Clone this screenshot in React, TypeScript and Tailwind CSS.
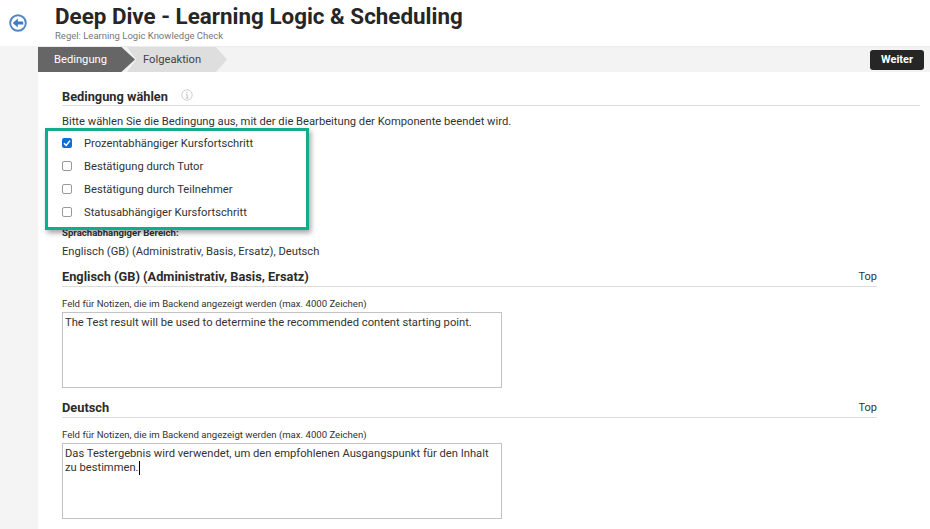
const rows = [
  { label: 'Prozentabhängiger Kursfortschritt', checked: true },
  { label: 'Bestätigung durch Tutor', checked: false },
  { label: 'Bestätigung durch Teilnehmer', checked: false },
  { label: 'Statusabhängiger Kursfortschritt', checked: false },
]

function BackIcon() {
  return (
    <svg width="18" height="18" viewBox="0 0 18 18">
      <circle cx="9" cy="9" r="7.8" fill="#fff" stroke="#4f86bf" strokeWidth="1.9" />
      <path d="M3.8 9 L8.8 4.6 V7.6 H14.2 V10.4 H8.8 V13.4 Z" fill="#3f7cbd" />
    </svg>
  )
}

function InfoIcon() {
  return (
    <svg width="12" height="12" viewBox="0 0 12 12" fill="none">
      <circle cx="6" cy="6" r="5.2" stroke="#cfcfcf" />
      <path d="M6 2.8v1.3M4.8 5.4H6.2V9M4.6 9h2.9" stroke="#c0c0c0" />
    </svg>
  )
}

function CheckRow({ label, checked }: { label: string; checked: boolean }) {
  return (
    <div className="flex h-[23px] items-center">
      {checked ? (
        <span className="flex h-[10px] w-[10px] items-center justify-center rounded-[2px] bg-[#0f6fd6]">
          <svg width="8" height="8" viewBox="0 0 8 8" fill="none">
            <path d="M1 4.2 3.2 6.4 7 1.6" stroke="#fff" strokeWidth="1.5" />
          </svg>
        </span>
      ) : (
        <span className="h-[10px] w-[10px] rounded-[2px] border border-[#999] bg-white" />
      )}
      <span className="ml-[12px] pt-[3px] text-[11.2px] text-[#333]">{label}</span>
    </div>
  )
}

function LangBlock({ title, text, caret }: { title: string; text: string; caret?: boolean }) {
  return (
    <section className="w-[815px]">
      <div className="flex h-[28px] items-end justify-between border-b border-[#dcdcdc] pb-[2px]">
        <h3 className="text-[12.8px] leading-[15px] font-bold text-[#2b2b2b]">{title}</h3>
        <a className="text-[11px] leading-[15px] text-[#333]">Top</a>
      </div>
      <p className="mt-[10px] text-[9.6px] leading-[13px] text-[#333]">
        Feld für Notizen, die im Backend angezeigt werden (max. 4000 Zeichen)
      </p>
      <div className="mt-[2px] h-[76px] w-[440px] border border-[#c3c3c3] bg-white px-[2px] pt-[3px] text-[11.2px] leading-[14px] text-[#333]">
        {text}
        {caret && <span className="inline-block h-[14px] w-px bg-black align-top" />}
      </div>
    </section>
  )
}

function App() {
  return (
    <div className="relative h-[529px] w-[930px] overflow-hidden bg-white font-['Roboto',sans-serif]">
      {/* Header */}
      <header className="flex h-[46px] items-start">
        <div className="flex w-[38px] justify-center pt-[14px] pr-[3px]">
          <BackIcon />
        </div>
        <div className="pl-[17px] pt-[4px]">
          <h1 className="text-[22.4px] leading-[25px] font-bold text-[#262626]">
            Deep Dive - Learning Logic &amp; Scheduling
          </h1>
          <p className="mt-[1px] text-[9.5px] leading-[11px] text-[#777]">Regel: Learning Logic Knowledge Check</p>
        </div>
      </header>

      <div className="flex h-[483px]">
        <aside className="w-[38px] bg-[#f4f4f4]" />

        <main className="flex-1">
          {/* Step bar */}
          <div className="flex h-[26px] items-center justify-between border-t border-[#ececec] bg-[#f3f3f3] pr-[6px]">
            <div className="flex h-full">
              <div className="flex w-[97px] items-center bg-[#666] pt-[2px] pl-[16px] text-[11.2px] text-white [clip-path:polygon(0_0,86%_0,100%_50%,86%_100%,0_100%)]">
                Bedingung
              </div>
              <div className="-ml-[8px] flex w-[100px] items-center bg-[#dedede] pt-[2px] pl-[16px] text-[11.2px] text-[#444] [clip-path:polygon(0_0,89%_0,100%_50%,89%_100%,0_100%,9%_50%)]">
                Folgeaktion
              </div>
            </div>
            <button className="flex h-[20px] w-[54px] items-center justify-center rounded-[3px] bg-[#262626] pt-[2px] text-[11px] font-bold text-white">
              Weiter
            </button>
          </div>

          <div className="pl-[24px]">
            <div className="flex h-[34px] w-[858px] items-end border-b border-[#dcdcdc] pb-[1px]">
              <h2 className="text-[12.8px] leading-[15px] font-bold text-[#2b2b2b]">Bedingung wählen</h2>
              <span className="mb-[3px] ml-[13px] flex">
                <InfoIcon />
              </span>
            </div>
            <p className="mt-[9px] text-[11.2px] leading-[14px] text-[#333]">
              Bitte wählen Sie die Bedingung aus, mit der die Bearbeitung der Komponente beendet wird.
            </p>
            <div className="mt-[2px]">
              {rows.map((r) => (
                <CheckRow key={r.label} label={r.label} checked={r.checked} />
              ))}
            </div>
            <p className="mt-[4px] text-[9.6px] leading-[12px] font-bold text-[#333]">Sprachabhängiger Bereich:</p>
            <p className="mt-[6px] text-[11.2px] leading-[14px] text-[#333]">
              Englisch (GB) (Administrativ, Basis, Ersatz), Deutsch
            </p>
            <LangBlock
              title="Englisch (GB) (Administrativ, Basis, Ersatz)"
              text="The Test result will be used to determine the recommended content starting point."
            />
            <div className="mt-[2px]">
              <LangBlock
                title="Deutsch"
                text="Das Testergebnis wird verwendet, um den empfohlenen Ausgangspunkt für den Inhalt zu bestimmen."
                caret
              />
            </div>
          </div>
        </main>
      </div>

      {/* Highlight annotation */}
      <div className="absolute left-[45px] top-[128px] h-[102px] w-[264px] border-[3px] border-[#10ad8c] shadow-[2px_3px_5px_rgba(0,0,0,0.35)]" />
    </div>
  )
}

export default App
